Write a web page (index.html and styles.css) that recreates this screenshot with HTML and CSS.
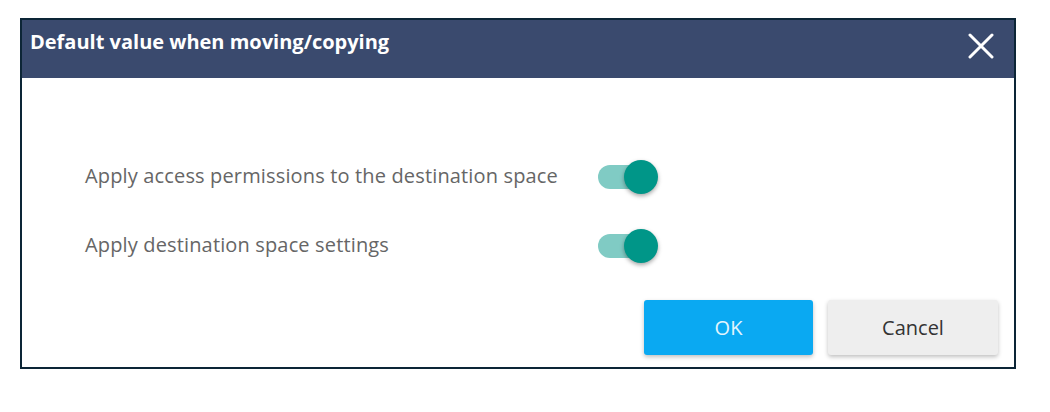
FILE: index.html
```html
<!DOCTYPE html>
<html lang="en">

<head>
	<meta charset="UTF-8">
	<meta name="viewport" content="width=device-width, initial-scale=1.0">
	<title>Default value when moving/copying</title>
	<link rel="stylesheet" href="styles.css">
</head>

<body>
	<div class="dialog">
		<div class="dialog-header">
			<h2 class="dialog-title">Default value when moving/copying</h2>
			<button type="button" class="close-btn" title="Close">
				<svg width="26" height="26" viewBox="0 0 26 26">
					<path d="M2 2 L24 24 M24 2 L2 24" stroke="#ffffff" stroke-width="3" stroke-linecap="round" fill="none" />
				</svg>
			</button>
		</div>

		<div class="dialog-body">
			<div class="option-row">
				<span class="option-label">Apply access permissions to the destination space</span>
				<label class="toggle">
					<input type="checkbox" checked>
					<span class="track"></span>
					<span class="knob"></span>
				</label>
			</div>
			<div class="option-row">
				<span class="option-label">Apply destination space settings</span>
				<label class="toggle">
					<input type="checkbox" checked>
					<span class="track"></span>
					<span class="knob"></span>
				</label>
			</div>
		</div>

		<div class="dialog-actions">
			<button type="button" class="btn btn-ok">OK</button>
			<button type="button" class="btn btn-cancel">Cancel</button>
		</div>
	</div>
</body>
</html>
```

FILE: styles.css
```css
body {
	margin: 0;
	background-color: #ffffff;
	font-family: "Open Sans", "Noto Sans", sans-serif;
}

.dialog {
	width: 992px;
	margin: 18px 0 0 20px;
	border: 2px solid #0c2536;
	background-color: #ffffff;
}

.dialog-header {
	height: 58px;
	background-color: #3a4a6e;
	display: flex;
	justify-content: space-between;
	align-items: flex-start;
	box-sizing: border-box;
	padding: 0 20px 0 8px;
}

.dialog-title {
	margin: 0;
	padding-top: 9px;
	color: #ffffff;
	font-size: 20px;
	font-weight: 700;
	line-height: 26px;
}

.close-btn {
	background: none;
	border: none;
	padding: 0;
	margin-top: 13px;
	width: 26px;
	height: 26px;
	cursor: pointer;
}

.close-btn svg {
	display: block;
}

.dialog-body {
	padding: 82px 0 0 63px;
	display: grid;
	row-gap: 35px;
}

.option-row {
	display: grid;
	grid-template-columns: 513px 60px;
	align-items: center;
	height: 34px;
}

.option-label {
	color: #666666;
	font-size: 20px;
	letter-spacing: 0.15px;
	padding-bottom: 3px;
}

.toggle {
	position: relative;
	width: 60px;
	height: 34px;
	cursor: pointer;
}

.toggle input {
	display: none;
}

.toggle .track {
	position: absolute;
	left: 0;
	top: 5px;
	width: 52px;
	height: 24px;
	border-radius: 12px;
	background-color: #80cbc4;
}

.toggle .knob {
	position: absolute;
	right: 0;
	top: 0;
	width: 34px;
	height: 34px;
	border-radius: 50%;
	background-color: #009688;
	box-shadow: 0 2px 4px hsla(0, 0%, 0%, 0.35);
}

.dialog-actions {
	display: flex;
	justify-content: flex-end;
	gap: 15px;
	padding: 37px 16px 12px 0;
}

.btn {
	width: 170px;
	height: 55px;
	border: none;
	border-radius: 3px;
	font-family: "Open Sans", "Noto Sans", sans-serif;
	font-size: 20px;
	cursor: pointer;
	box-shadow: 0 2px 4px hsla(0, 0%, 0%, 0.25);
}

.btn-ok {
	width: 169px;
	background-color: #0aa9f2;
	color: #e3f5fd;
}

.btn-cancel {
	background-color: #eeeeee;
	color: #333333;
}
```
